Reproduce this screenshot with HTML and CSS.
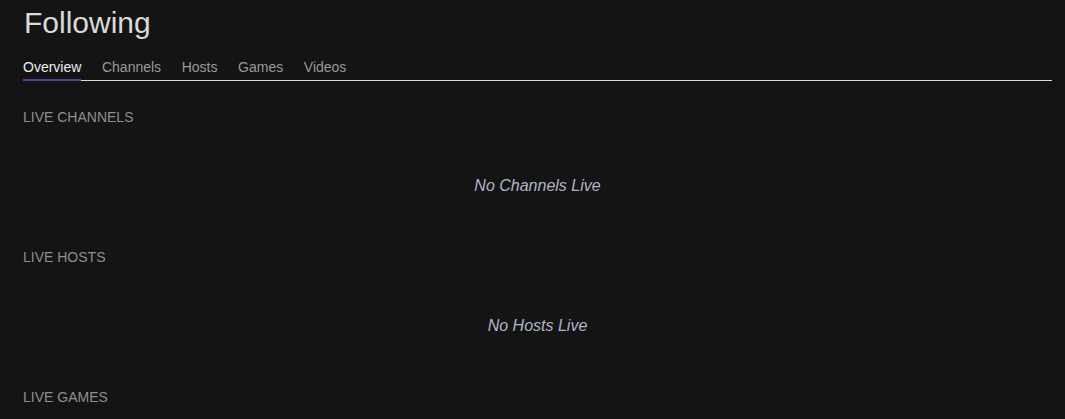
FILE: index.html
```html
<!DOCTYPE html>
<html>
<head>
<meta charset="utf-8">
<title>Following</title>
<link rel="stylesheet" href="styles.css">
</head>
<body>
<div class="page">
  <h1 class="title">Following</h1>
  <nav class="tabs">
    <a class="tab active">Overview</a>
    <a class="tab">Channels</a>
    <a class="tab">Hosts</a>
    <a class="tab">Games</a>
    <a class="tab">Videos</a>
  </nav>
  <div class="sections">
    <section class="section">
      <h2 class="section-title">LIVE CHANNELS</h2>
      <p class="empty">No Channels Live</p>
    </section>
    <section class="section">
      <h2 class="section-title">LIVE HOSTS</h2>
      <p class="empty">No Hosts Live</p>
    </section>
    <section class="section">
      <h2 class="section-title">LIVE GAMES</h2>
    </section>
  </div>
</div>
</body>
</html>
```
FILE: styles.css
```css
html, body {
  margin: 0;
  padding: 0;
  background: #141414;
  font-family: "Liberation Sans", Arial, sans-serif;
  overflow: hidden;
}

.page {
  padding: 0 13px 0 23px;
}

.title {
  margin: 5px 0 0 1px;
  font-size: 30px;
  line-height: 36px;
  font-weight: normal;
  color: #dadada;
}

.tabs {
  display: flex;
  gap: 20.6px;
  margin-top: 16px;
  border-bottom: 1px solid #dcdcdc;
}

.tab {
  font-size: 14px;
  line-height: 20px;
  padding-bottom: 2px;
  margin-bottom: -1px;
  border-bottom: 2px solid transparent;
  color: #9a9a9a;
}

.tab.active {
  color: #ececec;
  border-bottom-color: #5c3d99;
}

.sections {
  display: flex;
  flex-direction: column;
  gap: 51px;
  margin-top: 26px;
}

.section-title {
  margin: 0;
  font-size: 14px;
  line-height: 20px;
  font-weight: normal;
  color: #8e8e8e;
}

.empty {
  margin: 49px 0 0;
  font-size: 16px;
  line-height: 20px;
  font-style: italic;
  text-align: center;
  color: #b0b5cb;
}
```
